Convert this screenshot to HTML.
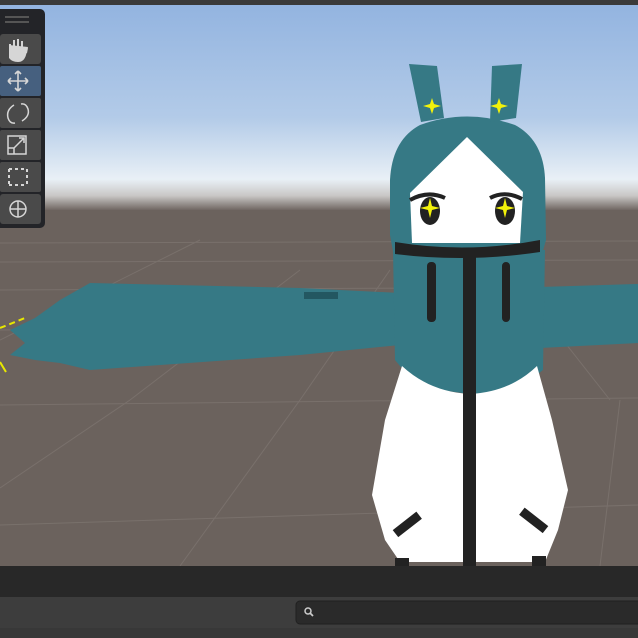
<!DOCTYPE html>
<html><head><meta charset="utf-8"><style>
html,body{margin:0;padding:0;width:638px;height:638px;overflow:hidden;background:#383838;font-family:"Liberation Sans",sans-serif}
</style></head><body>
<svg width="638" height="638" viewBox="0 0 638 638" xmlns="http://www.w3.org/2000/svg" style="display:block">
<defs>
<linearGradient id="sky" x1="0" y1="0" x2="0" y2="1">
<stop offset="0" stop-color="#93b4e0"/>
<stop offset="0.55" stop-color="#b3cbe8"/>
<stop offset="0.85" stop-color="#e9f0f6"/>
<stop offset="0.93" stop-color="#c9c7c6"/>
<stop offset="1" stop-color="#706762"/>
</linearGradient>
</defs>
<rect x="0" y="0" width="638" height="566" fill="#6b625d"/>
<rect x="0" y="5" width="638" height="205" fill="url(#sky)"/>
<rect x="0" y="0" width="638" height="5" fill="#3a3a3a"/>
<!-- grid -->
<g stroke="#7f7772" stroke-width="1" fill="none" opacity="0.7">
<line x1="0" y1="405" x2="638" y2="398"/>
<line x1="0" y1="525" x2="638" y2="505"/>
<line x1="0" y1="330" x2="638" y2="326"/>
<line x1="0" y1="290" x2="638" y2="287"/>
<line x1="0" y1="262" x2="638" y2="260"/>
<line x1="0" y1="243" x2="638" y2="241"/>
<line x1="0" y1="488" x2="130" y2="400"/>
<line x1="130" y1="400" x2="300" y2="270"/>
<line x1="180" y1="566" x2="300" y2="400"/>
<line x1="300" y1="400" x2="390" y2="270"/>
<line x1="0" y1="340" x2="200" y2="240"/>
<line x1="600" y1="566" x2="620" y2="400"/>
<line x1="555" y1="330" x2="610" y2="400"/>
</g>
<!-- right arm -->
<path d="M540 287 L638 284 L638 343 L540 348 Z" fill="#367985"/>
<!-- left arm -->
<path d="M400 293 L300 288 L90 283 L60 300 L35 318 L10 330 L25 343 L10 355 L35 360 L60 363 L90 370 L300 355 L400 345 Z" fill="#367985"/>
<g stroke="#e8e800" stroke-width="2" fill="none">
<line x1="0" y1="328" x2="25" y2="318" stroke-dasharray="6 4"/>
<line x1="0" y1="362" x2="6" y2="372"/>
</g>
<rect x="304" y="292" width="34" height="7" fill="#1f4f58" opacity="0.8"/>
<!-- hair back -->
<path d="M390 180 Q392 140 420 125 Q467 108 515 125 Q543 140 545 178 L546 240 L540 262 L395 262 L390 235 Z" fill="#367985"/>
<!-- ears -->
<path d="M409 64 L437 66 L444 118 L421 122 Z" fill="#367985"/>
<path d="M492 66 L522 64 L516 118 L490 122 Z" fill="#367985"/>
<!-- body -->
<path d="M393 250 L545 250 L543 370 L530 380 L500 392 L470 394 L440 390 L410 378 L395 360 Z" fill="#367985"/>
<!-- face -->
<path d="M467 137 L523 192 L520 243 L412 243 L410 193 Z" fill="#ffffff"/>
<!-- eyes -->
<ellipse cx="430" cy="211" rx="10" ry="14" fill="#222"/>
<ellipse cx="505" cy="211" rx="10" ry="14" fill="#222"/>
<path d="M410 200 Q428 190 445 198" stroke="#222" stroke-width="4" fill="none"/>
<path d="M490 198 Q505 190 522 199" stroke="#222" stroke-width="4" fill="none"/>
<g fill="#f2f20a">
<path d="M430 198 L432 206 L440 208 L432 210 L430 218 L428 210 L420 208 L428 206 Z"/>
<path d="M505 198 L507 206 L515 208 L507 210 L505 218 L503 210 L495 208 L503 206 Z"/>
<path d="M432 98 L434 104 L441 106 L434 108 L432 114 L430 108 L423 106 L430 104 Z"/>
<path d="M499 98 L501 104 L508 106 L501 108 L499 114 L497 108 L490 106 L497 104 Z"/>
</g>
<!-- collar -->
<path d="M395 242 Q467 254 540 240 L540 252 Q467 263 395 254 Z" fill="#222"/>
<!-- white skirt -->
<path d="M402 366 Q430 392 470 394 Q510 392 537 366 L552 420 L568 490 L558 530 L545 562 L400 562 L385 540 L372 495 L385 420 Z" fill="#ffffff"/>
<rect x="395" y="558" width="14" height="8" fill="#222"/>
<rect x="532" y="556" width="14" height="10" fill="#222"/>
<!-- drawstrings & zipper -->
<rect x="427" y="262" width="9" height="60" rx="4" fill="#222"/>
<rect x="502" y="262" width="8" height="60" rx="4" fill="#222"/>
<rect x="463" y="252" width="13" height="314" fill="#222"/>
<rect x="392" y="520" width="30" height="9" transform="rotate(-38 407 524)" fill="#222"/>
<rect x="519" y="516" width="30" height="9" transform="rotate(38 534 520)" fill="#222"/>
<!-- tool panel -->
<rect x="-6" y="9" width="51" height="219" rx="5" fill="#232428"/>
<rect x="5" y="16" width="24" height="2" fill="#555"/>
<rect x="5" y="21" width="24" height="2" fill="#555"/>
<rect x="0" y="34" width="41" height="30" rx="3" fill="#4a4a4a"/>
<rect x="0" y="66" width="41" height="30" rx="2" fill="#46607f"/>
<rect x="0" y="98" width="41" height="30" rx="2" fill="#4a4a4a"/>
<rect x="0" y="130" width="41" height="30" rx="2" fill="#4a4a4a"/>
<rect x="0" y="162" width="41" height="30" rx="2" fill="#4a4a4a"/>
<rect x="0" y="194" width="41" height="30" rx="3" fill="#4a4a4a"/>
<g fill="none" stroke="#d6d6d6" stroke-width="2">
<path d="M9 45 L9 58 Q12 62 18 62 Q24 62 26 55 L28 47" fill="#d6d6d6" stroke="none"/>
<path d="M10 52 L10 44 M14 51 L14 40 M18 51 L18 39 M22 51 L22 41 M26 53 L27 48"/>
<path d="M8 81 L28 81 M18 71 L18 91 M8 81 l3 -3 M8 81 l3 3 M28 81 l-3 -3 M28 81 l-3 3 M18 71 l-3 3 M18 71 l3 3 M18 91 l-3 -3 M18 91 l3 -3" stroke-width="1.6"/>
<path d="M14 105 Q6 110 8 118 Q10 124 15 123 M22 121 Q30 116 28 109 Q26 103 21 104" stroke-width="1.5"/>
<rect x="8" y="136" width="18" height="18" stroke-width="1.5"/>
<path d="M14 148 L24 138 M19 138 L24 138 L24 143 M8 148 L14 148 L14 154" stroke-width="1.5"/>
<path d="M9 169 L9 185 M27 169 L27 185 M9 169 L27 169 M9 185 L27 185" stroke-dasharray="3 3" stroke-width="2"/>
<circle cx="18" cy="209" r="8" stroke-width="1.5"/>
<path d="M10 209 L26 209 M18 201 L18 217" stroke-width="1.5"/>
</g>
<!-- bottom bars -->
<rect x="0" y="566" width="638" height="31" fill="#282828"/>
<rect x="0" y="597" width="638" height="31" fill="#3d3d3d"/>
<rect x="0" y="628" width="638" height="10" fill="#383838"/>
<rect x="296" y="601" width="350" height="23" rx="4" fill="#2a2a2a" stroke="#202020"/>
<circle cx="308" cy="611" r="3" fill="none" stroke="#ccc" stroke-width="1.5"/>
<line x1="310" y1="613" x2="313" y2="616" stroke="#ccc" stroke-width="1.8"/>
</svg>
</body></html>
